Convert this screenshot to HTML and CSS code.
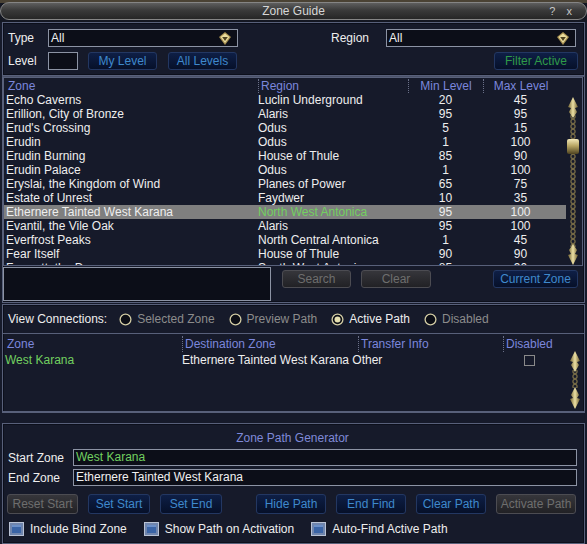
FILE: index.html
```html
<!DOCTYPE html>
<html lang="en">
<head>
    <meta charset="UTF-8">
    <title>Zone Guide</title>
    <link rel="stylesheet" href="styles.css">
</head>
<body>
<div class="window">
    <div class="titlebar">
        <div class="titlebar-bar">
            <span></span>
            <span class="title">Zone Guide</span>
            <span class="title-btns">? x</span>
        </div>
    </div>

    <div class="content">
        <!-- filters -->
        <div class="panel filters">
            <div class="filter-row">
                <span class="lbl">Type</span>
                <div class="field select type-select">
                    <span>All</span>
                    <svg class="drop" width="12" height="13" viewBox="0 0 12 13"><polygon points="6,0 12,5 6,13 0,5" fill="#a58e50"/><polygon points="6,1.5 10.5,5 6,11 1.5,5" fill="#eadc9c"/><polygon points="3.2,5 8.8,5 6,9" fill="#4e4220"/></svg>
                </div>
                <span class="lbl region-lbl">Region</span>
                <div class="field select region-select">
                    <span>All</span>
                    <svg class="drop" width="12" height="13" viewBox="0 0 12 13"><polygon points="6,0 12,5 6,13 0,5" fill="#a58e50"/><polygon points="6,1.5 10.5,5 6,11 1.5,5" fill="#eadc9c"/><polygon points="3.2,5 8.8,5 6,9" fill="#4e4220"/></svg>
                </div>
            </div>
            <div class="filter-row">
                <span class="lbl">Level</span>
                <div class="field level-input"></div>
                <button class="btn my-level">My Level</button>
                <button class="btn all-levels">All Levels</button>
                <button class="btn green filter-active">Filter Active</button>
            </div>
        </div>

        <!-- zone list -->
        <div class="panel zones">
            <div class="listbox zone-list">
                <div class="list-body">
                    <div class="zrow head">
                        <span>Zone</span><span class="sep">Region</span><span class="sep num">Min Level</span><span class="sep num">Max Level</span>
                    </div>
                    <div class="zrow"><span>Echo Caverns</span><span>Luclin Underground</span><span class="num">20</span><span class="num">45</span></div>
                    <div class="zrow"><span>Erillion, City of Bronze</span><span>Alaris</span><span class="num">95</span><span class="num">95</span></div>
                    <div class="zrow"><span>Erud's Crossing</span><span>Odus</span><span class="num">5</span><span class="num">15</span></div>
                    <div class="zrow"><span>Erudin</span><span>Odus</span><span class="num">1</span><span class="num">100</span></div>
                    <div class="zrow"><span>Erudin Burning</span><span>House of Thule</span><span class="num">85</span><span class="num">90</span></div>
                    <div class="zrow"><span>Erudin Palace</span><span>Odus</span><span class="num">1</span><span class="num">100</span></div>
                    <div class="zrow"><span>Eryslai, the Kingdom of Wind</span><span>Planes of Power</span><span class="num">65</span><span class="num">75</span></div>
                    <div class="zrow"><span>Estate of Unrest</span><span>Faydwer</span><span class="num">10</span><span class="num">35</span></div>
                    <div class="zrow selected"><span>Ethernere Tainted West Karana</span><span class="green-text">North West Antonica</span><span class="num">95</span><span class="num">100</span></div>
                    <div class="zrow"><span>Evantil, the Vile Oak</span><span>Alaris</span><span class="num">95</span><span class="num">100</span></div>
                    <div class="zrow"><span>Everfrost Peaks</span><span>North Central Antonica</span><span class="num">1</span><span class="num">45</span></div>
                    <div class="zrow"><span>Fear Itself</span><span>House of Thule</span><span class="num">90</span><span class="num">90</span></div>
                    <div class="zrow"><span>Feerrott, the Dream</span><span>South West Antonica</span><span class="num">85</span><span class="num">90</span></div>
                </div>
                <svg class="vscroll" width="16" height="186" viewBox="0 0 16 186">
                    <defs>
                        <linearGradient id="gold" x1="0" x2="1">
                            <stop offset="0" stop-color="#6e5f30"/>
                            <stop offset="0.5" stop-color="#ece0a4"/>
                            <stop offset="1" stop-color="#6a5a2c"/>
                        </linearGradient>
                        <linearGradient id="thumb" x1="0" y1="0" x2="0" y2="1">
                            <stop offset="0" stop-color="#f2e8b8"/>
                            <stop offset="0.45" stop-color="#b8a664"/>
                            <stop offset="1" stop-color="#4e4320"/>
                        </linearGradient>
                        <pattern id="chain" width="16" height="5" patternUnits="userSpaceOnUse">
                            <circle cx="7" cy="2.5" r="2.1" fill="none" stroke="#756a45" stroke-width="1.3"/>
                        </pattern>
                    </defs>
                    <rect x="3" y="36" width="9" height="132" fill="url(#chain)"/>
                    <polygon points="7,18 12,28 9,29 11,33 7,39 3,33 5,29 2,28" fill="url(#gold)"/>
                    <rect x="1" y="60" width="12" height="15" rx="2" fill="url(#thumb)"/>
                    <polygon points="7,186 12,176 9,175 11,171 7,165 3,171 5,175 2,176" fill="url(#gold)"/>
                </svg>
            </div>
            <div class="search-row">
                <div class="field search-input"></div>
                <button class="btn off search-btn">Search</button>
                <button class="btn off clear-btn">Clear</button>
                <button class="btn current-zone">Current Zone</button>
            </div>
        </div>

        <!-- connections -->
        <div class="panel connections">
            <div class="radio-bar">
                <span>View Connections:</span>
                <span class="radio dim"><svg width="13" height="13" viewBox="0 0 13 13"><circle cx="6.5" cy="6.5" r="5.4" fill="#0b0d15" stroke="#d2cca4" stroke-width="1.3"/></svg>Selected Zone</span>
                <span class="radio dim"><svg width="13" height="13" viewBox="0 0 13 13"><circle cx="6.5" cy="6.5" r="5.4" fill="#0b0d15" stroke="#d2cca4" stroke-width="1.3"/></svg>Preview Path</span>
                <span class="radio"><svg width="13" height="13" viewBox="0 0 13 13"><circle cx="6.5" cy="6.5" r="5.4" fill="#0b0d15" stroke="#d2cca4" stroke-width="1.3"/><circle cx="6.5" cy="6.5" r="3" fill="#e6e0b0"/></svg>Active Path</span>
                <span class="radio dim"><svg width="13" height="13" viewBox="0 0 13 13"><circle cx="6.5" cy="6.5" r="5.4" fill="#0b0d15" stroke="#d2cca4" stroke-width="1.3"/></svg>Disabled</span>
            </div>
            <div class="listbox conn-list">
                <div class="list-body">
                    <div class="crow head">
                        <span>Zone</span><span class="sep">Destination Zone</span><span class="sep">Transfer Info</span><span class="sep">Disabled</span>
                    </div>
                    <div class="crow">
                        <span class="green-text">West Karana</span>
                        <span class="wide">Ethernere Tainted West Karana Other</span>
                        <span class="center"><span class="box"></span></span>
                    </div>
                </div>
                <svg class="vscroll small" width="16" height="76" viewBox="0 0 16 76">
                    <rect x="4" y="36" width="7" height="18" fill="url(#chain)"/>
                    <polygon points="7,17 12,27 9,28 11,31 7,38 3,31 5,28 2,27" fill="url(#gold)"/>
                    <polygon points="7,75 12,65 9,64 11,61 7,53 3,61 5,64 2,65" fill="url(#gold)"/>
                </svg>
            </div>
        </div>

        <!-- path generator -->
        <div class="panel generator">
            <div class="gen-title">Zone Path Generator</div>
            <div class="gen-row">
                <span class="gen-lbl">Start Zone</span>
                <div class="field gen-field green-text">West Karana</div>
            </div>
            <div class="gen-row">
                <span class="gen-lbl">End Zone</span>
                <div class="field gen-field">Ethernere Tainted West Karana</div>
            </div>
            <div class="gen-buttons">
                <button class="btn off w71">Reset Start</button>
                <button class="btn w62">Set Start</button>
                <button class="btn w62">Set End</button>
                <button class="btn w70 push">Hide Path</button>
                <button class="btn w70">End Find</button>
                <button class="btn w70">Clear Path</button>
                <button class="btn off w80">Activate Path</button>
            </div>
            <div class="checks">
                <span class="check"><svg width="15" height="14" viewBox="0 0 15 14"><rect x="0.5" y="0.5" width="14" height="13" fill="#6f85ad" stroke="#b9c2d4"/><rect x="3" y="3" width="9" height="8" fill="#3a64a6"/><rect x="3" y="3" width="9" height="2" fill="#6b8fc8"/></svg>Include Bind Zone</span>
                <span class="check"><svg width="15" height="14" viewBox="0 0 15 14"><rect x="0.5" y="0.5" width="14" height="13" fill="#6f85ad" stroke="#b9c2d4"/><rect x="3" y="3" width="9" height="8" fill="#3a64a6"/><rect x="3" y="3" width="9" height="2" fill="#6b8fc8"/></svg>Show Path on Activation</span>
                <span class="check"><svg width="15" height="14" viewBox="0 0 15 14"><rect x="0.5" y="0.5" width="14" height="13" fill="#6f85ad" stroke="#b9c2d4"/><rect x="3" y="3" width="9" height="8" fill="#3a64a6"/><rect x="3" y="3" width="9" height="2" fill="#6b8fc8"/></svg>Auto-Find Active Path</span>
            </div>
        </div>
    </div>
</div>
</body>
</html>
```

FILE: styles.css
```css
* {
    box-sizing: border-box;
}
body {
    margin: 0;
    background: #1c1915;
    font-family: "Liberation Sans", Arial, sans-serif;
    font-size: 12px;
    color: #eeeeee;
}
.window {
    width: 587px;
    height: 544px;
    background: #161a2a;
    display: flex;
    flex-direction: column;
}

/* title bar */
.titlebar {
    height: 22px;
    padding-top: 2px;
    background: linear-gradient(#4a4234 0, #4a4234 3px, #141722 3px);
}
.titlebar-bar {
    height: 18px;
    border: 1px solid #858585;
    border-radius: 9px;
    background: linear-gradient(#5e5e5e, #3a3a3a 45%, #262626);
    display: grid;
    grid-template-columns: 1fr auto 1fr;
    align-items: center;
    color: #d6d6d6;
}
.title-btns {
    justify-self: end;
    padding-right: 10px;
    font-size: 11px;
    letter-spacing: 4px;
    color: #c8c8c8;
}

.content {
    padding: 0 2px;
    display: flex;
    flex-direction: column;
}
.panel {
    border: 1px solid #58607a;
    box-shadow: inset 0 0 0 1px #0c0f1b;
}

/* inputs */
.field {
    height: 18px;
    border: 1px solid #8c93a4;
    background: #0c0e18;
    padding-left: 2px;
    line-height: 16px;
    color: #f0f0f0;
}
.select {
    display: flex;
    justify-content: space-between;
    align-items: center;
    padding-right: 6px;
}
.btn {
    height: 18px;
    border: 1px solid #233762;
    border-radius: 3px;
    background: linear-gradient(#0e1f46, #061029);
    color: #3f89cc;
    font-family: inherit;
    font-size: 12px;
    padding: 0;
}
.btn.off {
    border-color: #4c4c52;
    background: linear-gradient(#36363b, #212125);
    color: #6e6e6e;
}
.btn.green {
    color: #2f9a48;
}
.green-text {
    color: #72d060;
}

/* filters */
.filters {
    height: 54px;
    padding: 6px 6px 0 5px;
}
.filter-row {
    display: flex;
    align-items: center;
    height: 18px;
    margin-bottom: 5px;
}
.lbl {
    width: 40px;
}
.type-select {
    width: 190px;
}
.region-lbl {
    margin-left: 93px;
    width: 55px;
}
.region-select {
    width: 190px;
}
.level-input {
    width: 30px;
}
.my-level {
    width: 69px;
    margin-left: 10px;
}
.all-levels {
    width: 69px;
    margin-left: 11px;
}
.filter-active {
    width: 84px;
    margin-left: auto;
}

/* zone list */
.zones {
    height: 227px;
    padding: 0 6px 0 0;
    border-top-color: #4a5168;
}
.listbox {
    border: 1px solid #58607a;
    display: flex;
    overflow: hidden;
}
.zone-list {
    height: 189px;
    margin-right: -5px;
    padding-top: 1px;
}
.list-body {
    flex: 1;
    overflow: hidden;
}
.zrow {
    display: grid;
    grid-template-columns: 252px 150px 75px 75px;
    height: 14px;
    line-height: 14px;
    padding-left: 2px;
    white-space: nowrap;
}
.zrow.selected {
    background: #7f7f7f;
}
.num {
    text-align: center;
}
.head {
    color: #7b87dc;
}
.head span {
    padding-left: 2px;
}
.head .num {
    padding-left: 0;
}
.sep {
    border-left: 1px dotted #6a7088;
}
.vscroll {
    flex: none;
}

.search-row {
    height: 36px;
    display: flex;
    align-items: flex-start;
    padding-top: 1px;
}
.search-input {
    width: 268px;
    height: 34px;
}
.search-row .btn {
    margin-top: 3px;
}
.search-btn {
    width: 69px;
    margin-left: 11px;
}
.clear-btn {
    width: 70px;
    margin-left: 10px;
}
.current-zone {
    width: 85px;
    margin-left: auto;
}

/* connections */
.connections {
    height: 109px;
    margin-top: 1px;
}
.radio-bar {
    height: 28px;
    display: flex;
    align-items: center;
    gap: 14px;
    padding-left: 5px;
}
.radio-bar > span:first-child {
    margin-right: -2px;
}
.radio {
    display: flex;
    align-items: center;
    gap: 5px;
}
.radio.dim {
    color: #8c8c8c;
}
.conn-list {
    height: 79px;
    margin: 0 -1px -1px -1px;
}
.crow {
    display: grid;
    grid-template-columns: 177px 176px 145px 52px;
    height: 16px;
    line-height: 16px;
    padding-left: 2px;
    white-space: nowrap;
}
.crow.head {
    margin-top: 2px;
}
.crow .wide {
    grid-column: 2 / 4;
}
.center {
    display: flex;
    justify-content: center;
    align-items: center;
}
.box {
    width: 11px;
    height: 11px;
    border: 1px solid #8a8a8a;
}

/* generator */
.generator {
    height: 121px;
    margin-top: 10px;
    padding: 6px 7px 0 5px;
}
.gen-title {
    text-align: center;
    color: #7f89d8;
    height: 16px;
    line-height: 16px;
    margin-bottom: 3px;
}
.gen-row {
    display: flex;
    align-items: center;
    height: 17px;
    margin-bottom: 3px;
}
.gen-lbl {
    width: 65px;
}
.gen-field {
    flex: 1;
    height: 17px;
    line-height: 15px;
}
.gen-buttons {
    display: flex;
    gap: 10px;
    margin-top: 8px;
    margin-left: -1px;
}
.gen-buttons .btn {
    height: 20px;
}
.w71 { width: 71px; }
.w62 { width: 62px; }
.w70 { width: 70px; }
.w80 { width: 80px; }
.push {
    margin-left: 24px;
}
.checks {
    display: flex;
    gap: 17px;
    margin-top: 8px;
    margin-left: 1px;
}
.check {
    display: flex;
    align-items: center;
    gap: 6px;
}
```
